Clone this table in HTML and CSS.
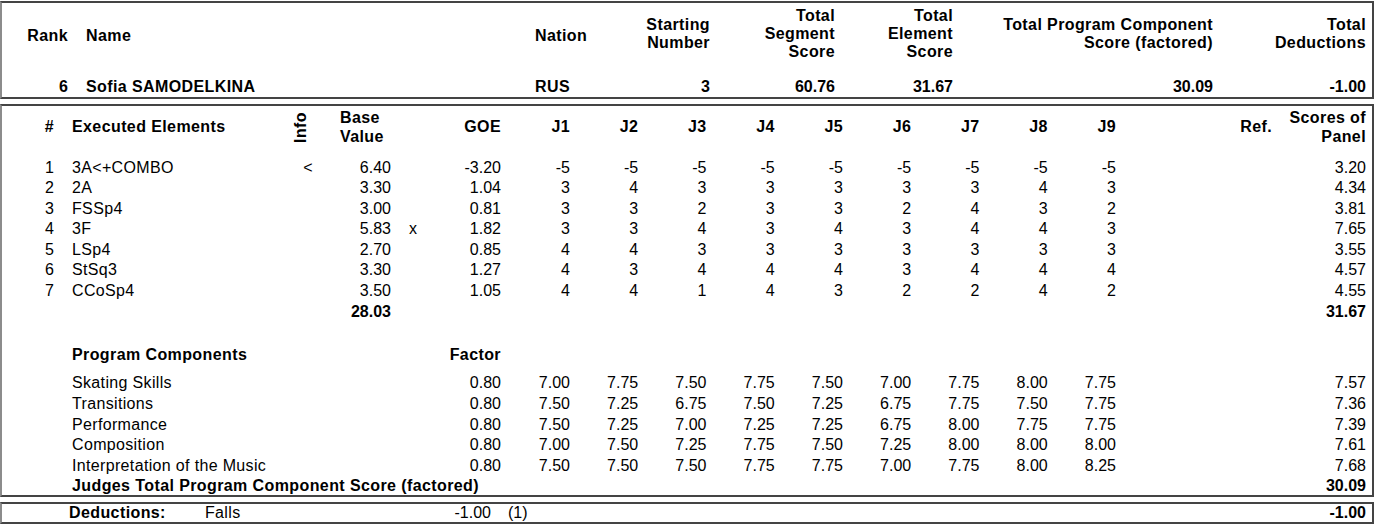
FILE: index.html
```html
<!DOCTYPE html>
<html>
<head>
<meta charset="utf-8">
<link rel="stylesheet" href="styles.css">
</head>
<body>
<div class="box summary">
  <div class="sgrid shead">
    <div class="r one">Rank</div>
    <div class="name one">Name</div>
    <div class="one">Nation</div>
    <div class="r">Starting<br>Number</div>
    <div class="r">Total<br>Segment<br>Score</div>
    <div class="r">Total<br>Element<br>Score</div>
    <div class="r">Total Program Component<br>Score (factored)</div>
    <div class="r">Total<br>Deductions</div>
  </div>
  <div class="sgrid sdata">
    <div class="r">6</div>
    <div class="name t">Sofia SAMODELKINA</div>
    <div class="t">RUS</div>
    <div class="r">3</div>
    <div class="r">60.76</div>
    <div class="r">31.67</div>
    <div class="r">30.09</div>
    <div class="r">-1.00</div>
  </div>
</div>

<div class="box detail">
  <div class="egrid ehead">
    <div class="r">#</div>
    <div class="name">Executed Elements</div>
    <div class="info"><span class="vert">Info</span></div>
    <div class="base">Base<br>Value</div>
    <div></div>
    <div class="r">GOE</div>
    <div class="r">J1</div>
    <div class="r">J2</div>
    <div class="r">J3</div>
    <div class="r">J4</div>
    <div class="r">J5</div>
    <div class="r">J6</div>
    <div class="r">J7</div>
    <div class="r">J8</div>
    <div class="r">J9</div>
    <div class="r">Ref.</div>
    <div class="r">Scores of<br>Panel</div>
  </div>

  <div class="elements">
    <div class="egrid row">
      <div class="r">1</div><div class="name t">3A&lt;+COMBO</div><div class="c">&lt;</div><div class="r">6.40</div><div class="c"></div><div class="r">-3.20</div>
      <div class="r">-5</div><div class="r">-5</div><div class="r">-5</div><div class="r">-5</div><div class="r">-5</div><div class="r">-5</div><div class="r">-5</div><div class="r">-5</div><div class="r">-5</div>
      <div></div><div class="r">3.20</div>
    </div>
    <div class="egrid row">
      <div class="r">2</div><div class="name t">2A</div><div class="c"></div><div class="r">3.30</div><div class="c"></div><div class="r">1.04</div>
      <div class="r">3</div><div class="r">4</div><div class="r">3</div><div class="r">3</div><div class="r">3</div><div class="r">3</div><div class="r">3</div><div class="r">4</div><div class="r">3</div>
      <div></div><div class="r">4.34</div>
    </div>
    <div class="egrid row">
      <div class="r">3</div><div class="name t">FSSp4</div><div class="c"></div><div class="r">3.00</div><div class="c"></div><div class="r">0.81</div>
      <div class="r">3</div><div class="r">3</div><div class="r">2</div><div class="r">3</div><div class="r">3</div><div class="r">2</div><div class="r">4</div><div class="r">3</div><div class="r">2</div>
      <div></div><div class="r">3.81</div>
    </div>
    <div class="egrid row">
      <div class="r">4</div><div class="name t">3F</div><div class="c"></div><div class="r">5.83</div><div class="c">x</div><div class="r">1.82</div>
      <div class="r">3</div><div class="r">3</div><div class="r">4</div><div class="r">3</div><div class="r">4</div><div class="r">3</div><div class="r">4</div><div class="r">4</div><div class="r">3</div>
      <div></div><div class="r">7.65</div>
    </div>
    <div class="egrid row">
      <div class="r">5</div><div class="name t">LSp4</div><div class="c"></div><div class="r">2.70</div><div class="c"></div><div class="r">0.85</div>
      <div class="r">4</div><div class="r">4</div><div class="r">3</div><div class="r">3</div><div class="r">3</div><div class="r">3</div><div class="r">3</div><div class="r">3</div><div class="r">3</div>
      <div></div><div class="r">3.55</div>
    </div>
    <div class="egrid row">
      <div class="r">6</div><div class="name t">StSq3</div><div class="c"></div><div class="r">3.30</div><div class="c"></div><div class="r">1.27</div>
      <div class="r">4</div><div class="r">3</div><div class="r">4</div><div class="r">4</div><div class="r">4</div><div class="r">3</div><div class="r">4</div><div class="r">4</div><div class="r">4</div>
      <div></div><div class="r">4.57</div>
    </div>
    <div class="egrid row">
      <div class="r">7</div><div class="name t">CCoSp4</div><div class="c"></div><div class="r">3.50</div><div class="c"></div><div class="r">1.05</div>
      <div class="r">4</div><div class="r">4</div><div class="r">1</div><div class="r">4</div><div class="r">3</div><div class="r">2</div><div class="r">2</div><div class="r">4</div><div class="r">2</div>
      <div></div><div class="r">4.55</div>
    </div>
    <div class="egrid row bold">
      <div></div><div class="name"></div><div></div><div class="r">28.03</div>
      <div class="score r">31.67</div>
    </div>
  </div>

  <div class="components">
    <div class="egrid row bold pchead">
      <div></div><div class="name pcname tb">Program Components</div><div class="r factor tb">Factor</div>
    </div>
    <div class="egrid row">
      <div></div><div class="name pcname t">Skating Skills</div><div class="r factor">0.80</div>
      <div class="r">7.00</div><div class="r">7.75</div><div class="r">7.50</div><div class="r">7.75</div><div class="r">7.50</div><div class="r">7.00</div><div class="r">7.75</div><div class="r">8.00</div><div class="r">7.75</div>
      <div></div><div class="r">7.57</div>
    </div>
    <div class="egrid row">
      <div></div><div class="name pcname t">Transitions</div><div class="r factor">0.80</div>
      <div class="r">7.50</div><div class="r">7.25</div><div class="r">6.75</div><div class="r">7.50</div><div class="r">7.25</div><div class="r">6.75</div><div class="r">7.75</div><div class="r">7.50</div><div class="r">7.75</div>
      <div></div><div class="r">7.36</div>
    </div>
    <div class="egrid row">
      <div></div><div class="name pcname t">Performance</div><div class="r factor">0.80</div>
      <div class="r">7.50</div><div class="r">7.25</div><div class="r">7.00</div><div class="r">7.25</div><div class="r">7.25</div><div class="r">6.75</div><div class="r">8.00</div><div class="r">7.75</div><div class="r">7.75</div>
      <div></div><div class="r">7.39</div>
    </div>
    <div class="egrid row">
      <div></div><div class="name pcname t">Composition</div><div class="r factor">0.80</div>
      <div class="r">7.00</div><div class="r">7.50</div><div class="r">7.25</div><div class="r">7.75</div><div class="r">7.50</div><div class="r">7.25</div><div class="r">8.00</div><div class="r">8.00</div><div class="r">8.00</div>
      <div></div><div class="r">7.61</div>
    </div>
    <div class="egrid row">
      <div></div><div class="name pcname t">Interpretation of the Music</div><div class="r factor">0.80</div>
      <div class="r">7.50</div><div class="r">7.50</div><div class="r">7.50</div><div class="r">7.75</div><div class="r">7.75</div><div class="r">7.00</div><div class="r">7.75</div><div class="r">8.00</div><div class="r">8.25</div>
      <div></div><div class="r">7.68</div>
    </div>
    <div class="egrid row bold">
      <div></div><div class="name judges tb">Judges Total Program Component Score (factored)</div>
      <div class="score r">30.09</div>
    </div>
  </div>
</div>

<div class="box deductions">
  <div class="bold tb">Deductions:</div>
  <div class="t">Falls</div>
  <div class="r">-1.00</div>
  <div class="count">(1)</div>
  <div class="r bold">-1.00</div>
</div>
</body>
</html>
```

FILE: styles.css
```css
html, body {
  margin: 0;
  padding: 0;
  background: #ffffff;
}

body {
  font-family: "Liberation Sans", Arial, sans-serif;
  font-size: 16px;
  color: #000000;
}

.box {
  box-sizing: border-box;
  width: 1374px;
  border: 2px solid #444444;
  border-left-color: #8c8c8c;
  padding-right: 6px;
}

.r { text-align: right; }
.c { text-align: center; }
.bold { font-weight: bold; }

/* widened text labels (numbers keep natural spacing) */
.t { letter-spacing: 0.34px; }
.tb { letter-spacing: 0.4px; }

/* ---------- summary box ---------- */
.summary {
  margin-top: 1px;
  height: 98px;
  padding-top: 4px;
  font-weight: bold;
}

.sgrid {
  display: grid;
  grid-template-columns: 66px 467px 85px 90px 125px 118px 260px 153px;
  line-height: 18px;
}

.sgrid .name { padding-left: 18px; }

.shead {
  height: 54px;
  align-items: center;
  letter-spacing: 0.4px;
}

.shead .one { padding-top: 4px; }

.sdata {
  margin-top: 17px;
}

.sdata .t { letter-spacing: 0.4px; }

/* ---------- detail box ---------- */
.detail {
  margin-top: 5px;
  height: 393px;
  padding-top: 3px;
}

.egrid {
  display: grid;
  grid-template-columns: 52px 236px 36px 65px 44px 66px 69px repeat(8, 68.25px) 156px 94px;
}

.egrid .name { padding-left: 18px; }

.ehead {
  font-weight: bold;
  line-height: 18.5px;
  height: 37px;
  align-items: center;
  letter-spacing: 0.4px;
}

.ehead .base { padding-left: 14px; }

.info {
  display: flex;
  justify-content: center;
  align-items: center;
  padding-right: 14px;
}

.vert {
  writing-mode: vertical-rl;
  transform: rotate(180deg);
  line-height: 16px;
}

.elements {
  margin-top: 11.5px;
}

.row {
  line-height: 20.6px;
  height: 20.6px;
}

.row .score { grid-column: 17; }

.components {
  margin-top: 22.5px;
}

.pchead { margin-bottom: 8px; }

.pcname { grid-column: 2 / span 4; }
.factor { grid-column: 6; }

.judges {
  grid-column: 2 / span 15;
  white-space: nowrap;
}

/* ---------- deductions box ---------- */
.deductions {
  margin-top: 5px;
  height: 22px;
  padding-left: 67px;
  display: grid;
  grid-template-columns: 136px 215px 71px auto 1fr;
  line-height: 18px;
}

.deductions .count { padding-left: 17px; }
```
